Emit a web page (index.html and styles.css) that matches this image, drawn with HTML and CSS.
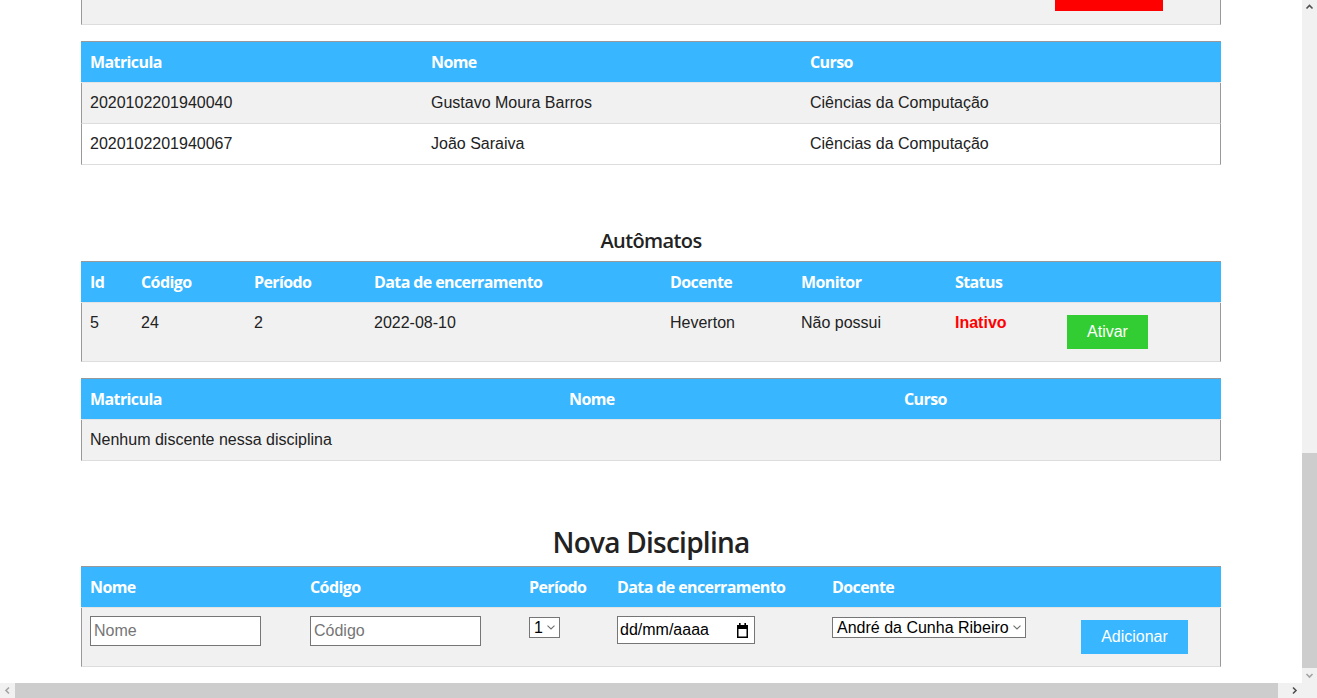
FILE: index.html
```html
<!DOCTYPE html>
<html lang="pt-BR">
<head>
<meta charset="utf-8">
<title>Disciplinas</title>
<link rel="stylesheet" href="styles.css">
</head>
<body>
<div class="ecran">
  <div class="pagina">
    <main class="container">
      <div class="linha-cortada"><span class="btn-cortado"></span></div>

      <table class="tabela espaco">
        <colgroup><col class="c341"><col class="c379"><col class="c420"></colgroup>
        <thead><tr><th>Matricula</th><th>Nome</th><th>Curso</th></tr></thead>
        <tbody>
          <tr><td>2020102201940040</td><td>Gustavo Moura Barros</td><td>Ciências da Computação</td></tr>
          <tr><td>2020102201940067</td><td>João Saraiva</td><td>Ciências da Computação</td></tr>
        </tbody>
      </table>

      <section class="disciplina">
        <h3 class="titulo">Autômatos</h3>
        <table class="tabela">
          <colgroup><col class="c51"><col class="c113"><col class="c120"><col class="c296"><col class="c131"><col class="c154"><col class="c112"><col class="c163"></colgroup>
          <thead><tr><th>Id</th><th>Código</th><th>Período</th><th>Data de encerramento</th><th>Docente</th><th>Monitor</th><th>Status</th><th></th></tr></thead>
          <tbody><tr class="linha-acoes"><td>5</td><td>24</td><td>2</td><td>2022-08-10</td><td>Heverton</td><td>Não possui</td><td><span class="inativo">Inativo</span></td><td><button class="btn btn-ativar">Ativar</button></td></tr></tbody>
        </table>
        <table class="tabela espaco">
          <colgroup><col class="c479"><col class="c335"><col class="c326"></colgroup>
          <thead><tr><th>Matricula</th><th>Nome</th><th>Curso</th></tr></thead>
          <tbody>
            <tr><td colspan="3">Nenhum discente nessa disciplina</td></tr>
          </tbody>
        </table>
      </section>

      <section class="nova">
        <h2 class="titulo-nova">Nova Disciplina</h2>
        <table class="tabela">
          <colgroup><col class="c220"><col class="c219"><col class="c88"><col class="c215"><col class="c249"><col class="c149"></colgroup>
          <thead><tr><th>Nome</th><th>Código</th><th>Período</th><th>Data de encerramento</th><th>Docente</th><th></th></tr></thead>
          <tbody>
            <tr class="linha-form">
              <td><input class="campo" type="text" placeholder="Nome"></td>
              <td><input class="campo" type="text" placeholder="Código"></td>
              <td>
                <span class="sel-wrap">
                  <select class="sel sel-periodo"><option>1</option><option>2</option><option>3</option></select>
                  <svg class="seta-sel" width="8" height="5" viewBox="0 0 8 5" aria-hidden="true"><polyline points="0.5,0.7 4,4 7.5,0.7" fill="none" stroke="#6f6f6f" stroke-width="1.1"/></svg>
                </span>
              </td>
              <td>
                <div class="data">
                  <span>dd/mm/aaaa</span>
                  <svg class="cal" width="13" height="15" viewBox="0 0 13 15" aria-hidden="true">
                    <rect x="3" y="0" width="1.6" height="3" fill="#000"/>
                    <rect x="8.4" y="0" width="1.6" height="3" fill="#000"/>
                    <path d="M1 2h11v13H1z M2.5 6v7.5h8V6z" fill="#000" fill-rule="evenodd"/>
                  </svg>
                </div>
              </td>
              <td>
                <span class="sel-wrap">
                  <select class="sel sel-docente"><option>André da Cunha Ribeiro</option><option>Heverton</option></select>
                  <svg class="seta-sel" width="8" height="5" viewBox="0 0 8 5" aria-hidden="true"><polyline points="0.5,0.7 4,4 7.5,0.7" fill="none" stroke="#6f6f6f" stroke-width="1.1"/></svg>
                </span>
              </td>
              <td><button class="btn btn-add">Adicionar</button></td>
            </tr>
          </tbody>
        </table>
      </section>
    </main>
  </div>

  <div class="barra-v">
    <div class="seta">
      <svg width="15" height="15" viewBox="0 0 15 15"><polyline points="4.5,8.5 7.5,5.5 10.5,8.5" fill="none" stroke="#505050" stroke-width="1.6"/></svg>
    </div>
    <div class="trilho-v"><div class="polegar-v"></div></div>
    <div class="seta">
      <svg width="15" height="15" viewBox="0 0 15 15"><polyline points="4.5,6 7.5,9 10.5,6" fill="none" stroke="#a3a3a3" stroke-width="1.6"/></svg>
    </div>
  </div>

  <div class="barra-h">
    <div class="seta">
      <svg width="15" height="15" viewBox="0 0 15 15"><polyline points="9,4.5 6,7.5 9,10.5" fill="none" stroke="#a3a3a3" stroke-width="1.6"/></svg>
    </div>
    <div class="trilho-h"><div class="polegar-h"></div></div>
    <div class="seta">
      <svg width="15" height="15" viewBox="0 0 15 15"><polyline points="6,4.5 9,7.5 6,10.5" fill="none" stroke="#505050" stroke-width="1.6"/></svg>
    </div>
  </div>

  <div class="canto"></div>
</div>
</body>
</html>
```

FILE: styles.css
```css
html,
body {
  margin: 0;
  overflow: hidden;
}

body {
  font-family: "Liberation Sans", Arial, sans-serif;
  font-size: 16px;
  color: #222;
  background: #fff;
}

/* janela: página + barras de rolagem */
.ecran {
  display: grid;
  grid-template-columns: 1302px 15px;
  grid-template-rows: 683px 15px;
  width: 1317px;
  height: 698px;
}

.pagina {
  overflow: hidden;
  background: #fff;
}

.barra-v {
  display: flex;
  flex-direction: column;
  background: #f1f1f1;
}

.barra-h {
  display: flex;
  background: #f1f1f1;
}

.seta {
  flex: none;
  width: 15px;
  height: 15px;
}

.seta svg {
  display: block;
}

.trilho-v {
  flex: 1;
  display: flex;
  flex-direction: column;
  justify-content: flex-end;
}

.polegar-v {
  height: 215px;
  background: #cdcdcd;
}

.trilho-h {
  flex: 1;
  display: flex;
}

.polegar-h {
  width: 1263px;
  background: #cdcdcd;
}

.canto {
  background: #f1f1f1;
}

/* conteúdo */
.container {
  width: 1140px;
  margin: 0 auto;
  display: flex;
  flex-direction: column;
}

.linha-cortada {
  height: 24px;
  display: flex;
  align-items: flex-start;
  padding-left: 973px;
  background: #f1f1f1;
  border-left: 1px solid #999;
  border-right: 1px solid #999;
  border-bottom: 1px solid #ddd;
}

.btn-cortado {
  width: 108px;
  height: 11px;
  background: #ff0000;
}

.disciplina,
.nova {
  display: flex;
  flex-direction: column;
}

.disciplina {
  margin-top: 64px;
}

.titulo {
  margin: 0 0 8px;
  text-align: center;
  font-family: "Open Sans", sans-serif;
  font-weight: 600;
  font-size: 20px;
  line-height: 24px;
  letter-spacing: -0.6px;
  color: #222;
}

.nova {
  margin-top: 63px;
}

.titulo-nova {
  margin: 0 0 6px;
  text-align: center;
  font-family: "Open Sans", sans-serif;
  font-weight: 600;
  font-size: 28px;
  line-height: 36px;
  letter-spacing: -0.75px;
  color: #222;
}

.tabela {
  width: 1140px;
  table-layout: fixed;
  border-collapse: separate;
  border-spacing: 0;
}

.espaco {
  margin-top: 16px;
}

.c51 { width: 51px; }
.c88 { width: 88px; }
.c112 { width: 112px; }
.c113 { width: 113px; }
.c120 { width: 120px; }
.c131 { width: 131px; }
.c149 { width: 149px; }
.c154 { width: 154px; }
.c163 { width: 163px; }
.c215 { width: 215px; }
.c219 { width: 219px; }
.c220 { width: 220px; }
.c249 { width: 249px; }
.c296 { width: 296px; }
.c326 { width: 326px; }
.c335 { width: 335px; }
.c341 { width: 341px; }
.c379 { width: 379px; }
.c420 { width: 420px; }
.c479 { width: 479px; }

.tabela th {
  background: #38b6ff;
  color: #fff;
  text-align: left;
  font-family: "Open Sans", sans-serif;
  font-weight: 700;
  font-size: 16px;
  line-height: 18px;
  letter-spacing: -0.6px;
  padding: 11px 9px;
  border-top: 1px solid #999;
  border-bottom: 1px solid #e4e4e4;
  white-space: nowrap;
}

.tabela td {
  padding: 11px 9px;
  line-height: 18px;
  vertical-align: top;
  border-bottom: 1px solid #ddd;
  white-space: nowrap;
}

.tabela td:first-child {
  border-left: 1px solid #999;
  padding-left: 8px;
}

.tabela td:last-child {
  border-right: 1px solid #999;
}

.tabela tbody tr:nth-child(odd) td {
  background: #f1f1f1;
}

.tabela tbody tr:nth-child(even) td {
  background: #fff;
}

.linha-acoes td {
  padding-bottom: 12px;
}

.linha-form td {
  padding-top: 8px;
  padding-bottom: 12px;
}

.inativo {
  color: #ff0000;
  font-weight: 700;
}

.btn {
  display: block;
  height: 34px;
  margin: 1px 0 0;
  padding: 0;
  border: 0;
  border-radius: 0;
  color: #fff;
  font-family: "Liberation Sans", Arial, sans-serif;
  font-size: 16px;
  cursor: pointer;
}

.btn-ativar {
  width: 81px;
  background: #32cd32;
}

.btn-add {
  width: 107px;
  margin-top: 4px;
  background: #38b6ff;
}

.campo {
  display: block;
  box-sizing: border-box;
  width: 171px;
  height: 30px;
  margin: 0;
  padding: 1px 3px;
  border: 1px solid #767676;
  border-radius: 0;
  background: #fff;
  font-family: "Liberation Sans", Arial, sans-serif;
  font-size: 16px;
  color: #000;
}

.campo::placeholder {
  color: #757575;
}

.sel-wrap {
  position: relative;
  display: block;
  width: max-content;
  margin-top: 1px;
}

.sel {
  -webkit-appearance: none;
  appearance: none;
  display: block;
  box-sizing: border-box;
  height: 21px;
  margin: 0;
  padding: 0 16px 0 4px;
  font-family: "Liberation Sans", Arial, sans-serif;
  font-size: 16px;
  line-height: 19px;
  color: #000;
  background: #fff;
  border: 1px solid #767676;
  border-radius: 0;
}

.sel-periodo {
  width: 31px;
}

.sel-docente {
  width: 194px;
}

.seta-sel {
  position: absolute;
  right: 5px;
  top: 8px;
  pointer-events: none;
}

.data {
  box-sizing: border-box;
  width: 138px;
  height: 28px;
  display: flex;
  align-items: center;
  justify-content: space-between;
  padding: 0 5px 0 2px;
  border: 1px solid #767676;
  background: #fff;
  color: #000;
  font-size: 16px;
}

.cal {
  display: block;
}
```
